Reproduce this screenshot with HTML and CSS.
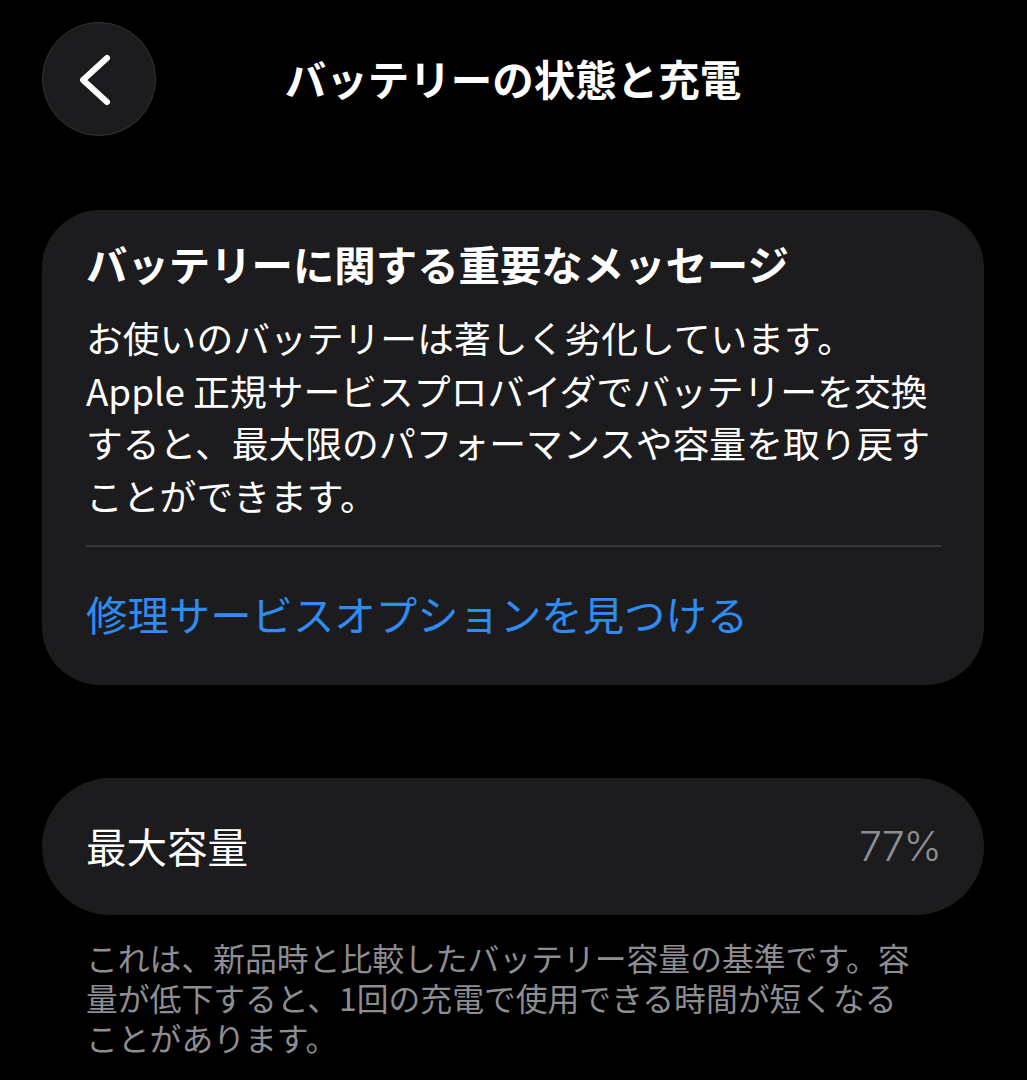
FILE: index.html
```html
<!DOCTYPE html>
<html lang="ja">
<head>
<meta charset="utf-8">
<title>バッテリーの状態と充電</title>
<link rel="stylesheet" href="styles.css">
</head>
<body>
<div class="page">
  <header class="nav">
    <button class="back" aria-label="戻る">
      <svg width="114" height="114" viewBox="0 0 114 114">
        <polyline points="65,36 41,58 65,80" fill="none" stroke="#fff" stroke-width="6" stroke-linecap="round" stroke-linejoin="round"/>
      </svg>
    </button>
    <h1 class="title">バッテリーの状態と充電</h1>
    <div class="spacer"></div>
  </header>

  <section class="card message">
    <h2 class="card-title">バッテリーに関する重要なメッセージ</h2>
    <p class="card-body">お使いのバッテリーは著しく劣化しています。<br>Apple 正規サービスプロバイダでバッテリーを交換<br>すると、最大限のパフォーマンスや容量を取り戻す<br>ことができます。</p>
    <div class="divider"></div>
    <a class="link">修理サービスオプションを見つける</a>
  </section>

  <section class="card capacity">
    <span class="cap-label">最大容量</span>
    <span class="cap-value">77%</span>
  </section>
  <p class="footnote"><span class="fn-line">これは、新品時と比較したバッテリー容量の基準です。容</span><span class="fn-line">量が低下すると、1回の充電で使用できる時間が短くなる</span><span class="fn-line">ことがあります。</span></p>
</div>
</body>
</html>
```

FILE: styles.css
```css
html, body {
  margin: 0;
  padding: 0;
  background: #000;
}
body {
  font-family: "Noto Sans CJK JP", "Noto Sans", sans-serif;
  color: #fff;
  width: 1027px;
  height: 1080px;
  overflow: hidden;
}
.page {
  padding: 22px 43px 0 42px;
}
.nav {
  display: grid;
  grid-template-columns: 114px 1fr 114px;
  align-items: center;
  height: 114px;
}
.back {
  width: 114px;
  height: 114px;
  border-radius: 50%;
  background: #1c1c1e;
  border: 1.5px solid #333335;
  padding: 0;
  display: flex;
  align-items: center;
  justify-content: center;
  box-sizing: border-box;
}
.back svg { display: block; flex: none; }
.title {
  margin: 0;
  text-align: center;
  font-size: 41.5px;
  font-weight: 700;
  line-height: 1.2;
}
.card {
  background: #1c1c1e;
  border-radius: 58px;
}
.message {
  margin-top: 74px;
  padding: 27px 42px 46px 44px;
  height: 475px;
  box-sizing: border-box;
}
.card-title {
  margin: 0;
  font-size: 41.4px;
  font-weight: 700;
  line-height: 52px;
}
.card-body {
  margin: 22px 0 0;
  font-size: 36.8px;
  font-weight: 400;
  line-height: 52.5px;
  white-space: nowrap;
}
.divider {
  height: 2px;
  background: #38383a;
  margin-top: 24px;
}
.link {
  display: block;
  margin-top: 40px;
  font-size: 41.4px;
  line-height: 52px;
  color: #2f8cf2;
}
.capacity {
  margin-top: 93px;
  height: 137px;
  border-radius: 69px;
  display: flex;
  align-items: center;
  justify-content: space-between;
  padding: 0 43px 0 44px;
  box-sizing: border-box;
}
.cap-label {
  font-size: 40.5px;
  line-height: 1;
}
.cap-value {
  font-family: "Inter", "Noto Sans", sans-serif;
  font-size: 41px;
  color: #8e8e93;
  font-weight: 300;
  line-height: 1;
  letter-spacing: -1px;
}
.footnote {
  margin: 22px 0 0 44px;
  font-size: 31.8px;
  color: #8d8d92;
  white-space: nowrap;
}
.fn-line {
  display: block;
  height: 40px;
  line-height: 40px;
}
```
